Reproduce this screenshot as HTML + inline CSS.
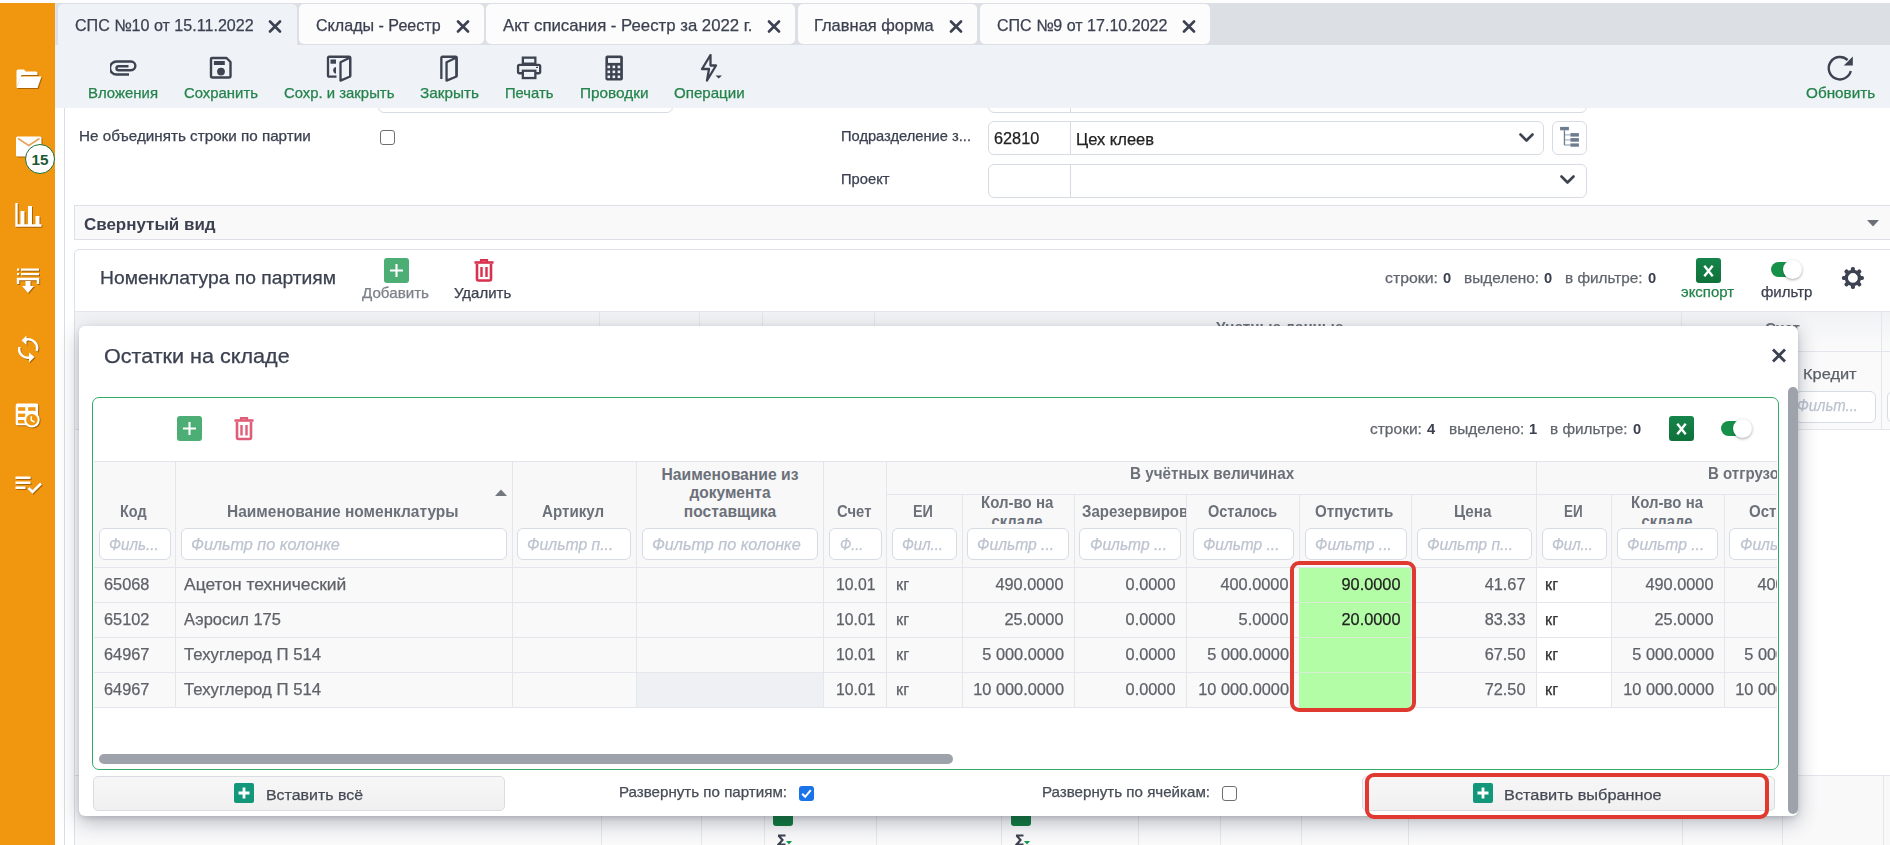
<!DOCTYPE html>
<html><head><meta charset="utf-8"><style>
html,body{margin:0;padding:0;}
body{width:1890px;height:845px;position:relative;overflow:hidden;background:#fff;font-family:'Liberation Sans', sans-serif;}
.t{font-family:'Liberation Sans', sans-serif;-webkit-text-stroke:0.25px currentColor;}
</style></head><body>
<div style="position:absolute;left:0px;top:0px;width:1890px;height:3px;background:#fdfdfd"></div>
<div style="position:absolute;left:0px;top:3px;width:55px;height:842px;background:#f0960f"></div>
<div style="position:absolute;left:55px;top:3px;width:1835px;height:42px;background:#dcdfe4"></div>
<div style="position:absolute;left:55px;top:3px;width:1px;height:105px;background:#dfe6f0"></div>
<div style="position:absolute;left:378px;top:78px;width:295px;height:34.5px;box-sizing:border-box;border:1px solid #d7dbe4;border-radius:6px;background:#fff"></div>
<div style="position:absolute;left:988px;top:78px;width:599px;height:34.5px;box-sizing:border-box;border:1px solid #d7dbe4;border-radius:6px;background:#fff"></div>
<div style="position:absolute;left:1069.5px;top:78px;width:1px;height:34px;background:#d7dbe4"></div>
<div style="position:absolute;left:55px;top:45px;width:1835px;height:63px;background:#eff2f7"></div>
<div style="position:absolute;left:58px;top:4px;width:239px;height:41px;background:#eff2f7;border-radius:5px 5px 0 0"></div>
<div class="t" style="position:absolute;top:17.43px;font-size:16.2px;line-height:16.2px;white-space:nowrap;color:#3b4150;font-weight:400;left:74.8px;transform-origin:0 0;transform:scaleX(0.9941);">СПС №10 от 15.11.2022</div>
<svg style="position:absolute;left:268px;top:20px;" width="14" height="13" viewBox="0 0 14 13"><path d="M2 1.5 L12 11.5 M12 1.5 L2 11.5" stroke="#3b4150" stroke-width="2.6" stroke-linecap="round" fill="none"/></svg>
<div style="position:absolute;left:299px;top:4px;width:185px;height:40px;background:#fcfcfd;border-radius:5px"></div>
<div class="t" style="position:absolute;top:17.43px;font-size:16.2px;line-height:16.2px;white-space:nowrap;color:#3b4150;font-weight:400;left:316px;transform-origin:0 0;transform:scaleX(0.9931);">Склады - Реестр</div>
<svg style="position:absolute;left:456px;top:20px;" width="14" height="13" viewBox="0 0 14 13"><path d="M2 1.5 L12 11.5 M12 1.5 L2 11.5" stroke="#3b4150" stroke-width="2.6" stroke-linecap="round" fill="none"/></svg>
<div style="position:absolute;left:486px;top:4px;width:309px;height:40px;background:#fcfcfd;border-radius:5px"></div>
<div class="t" style="position:absolute;top:17.43px;font-size:16.2px;line-height:16.2px;white-space:nowrap;color:#3b4150;font-weight:400;left:502.5px;transform-origin:0 0;transform:scaleX(1.0350);">Акт списания - Реестр за 2022 г.</div>
<svg style="position:absolute;left:767px;top:20px;" width="14" height="13" viewBox="0 0 14 13"><path d="M2 1.5 L12 11.5 M12 1.5 L2 11.5" stroke="#3b4150" stroke-width="2.6" stroke-linecap="round" fill="none"/></svg>
<div style="position:absolute;left:798px;top:4px;width:179px;height:40px;background:#fcfcfd;border-radius:5px"></div>
<div class="t" style="position:absolute;top:17.43px;font-size:16.2px;line-height:16.2px;white-space:nowrap;color:#3b4150;font-weight:400;left:814.4px;transform-origin:0 0;transform:scaleX(1.0180);">Главная форма</div>
<svg style="position:absolute;left:948.6px;top:20px;" width="14" height="13" viewBox="0 0 14 13"><path d="M2 1.5 L12 11.5 M12 1.5 L2 11.5" stroke="#3b4150" stroke-width="2.6" stroke-linecap="round" fill="none"/></svg>
<div style="position:absolute;left:980px;top:4px;width:230px;height:40px;background:#fcfcfd;border-radius:5px"></div>
<div class="t" style="position:absolute;top:17.43px;font-size:16.2px;line-height:16.2px;white-space:nowrap;color:#3b4150;font-weight:400;left:996.5px;transform-origin:0 0;transform:scaleX(0.9910);">СПС №9 от 17.10.2022</div>
<svg style="position:absolute;left:1181.6px;top:20px;" width="14" height="13" viewBox="0 0 14 13"><path d="M2 1.5 L12 11.5 M12 1.5 L2 11.5" stroke="#3b4150" stroke-width="2.6" stroke-linecap="round" fill="none"/></svg>
<div class="t" style="position:absolute;top:86.03px;font-size:14.2px;line-height:14.2px;white-space:nowrap;color:#24834b;font-weight:400;left:88px;transform-origin:0 0;transform:scaleX(1.0531);">Вложения</div>
<div class="t" style="position:absolute;top:86.03px;font-size:14.2px;line-height:14.2px;white-space:nowrap;color:#24834b;font-weight:400;left:184px;transform-origin:0 0;transform:scaleX(1.0494);">Сохранить</div>
<div class="t" style="position:absolute;top:86.03px;font-size:14.2px;line-height:14.2px;white-space:nowrap;color:#24834b;font-weight:400;left:283.6px;transform-origin:0 0;transform:scaleX(1.0485);">Сохр. и закрыть</div>
<div class="t" style="position:absolute;top:86.03px;font-size:14.2px;line-height:14.2px;white-space:nowrap;color:#24834b;font-weight:400;left:420px;transform-origin:0 0;transform:scaleX(1.0795);">Закрыть</div>
<div class="t" style="position:absolute;top:86.03px;font-size:14.2px;line-height:14.2px;white-space:nowrap;color:#24834b;font-weight:400;left:504.6px;transform-origin:0 0;transform:scaleX(1.0412);">Печать</div>
<div class="t" style="position:absolute;top:86.03px;font-size:14.2px;line-height:14.2px;white-space:nowrap;color:#24834b;font-weight:400;left:579.5px;transform-origin:0 0;transform:scaleX(1.0811);">Проводки</div>
<div class="t" style="position:absolute;top:86.03px;font-size:14.2px;line-height:14.2px;white-space:nowrap;color:#24834b;font-weight:400;left:674px;transform-origin:0 0;transform:scaleX(1.0637);">Операции</div>
<div class="t" style="position:absolute;top:86.03px;font-size:14.2px;line-height:14.2px;white-space:nowrap;color:#24834b;font-weight:400;left:1805.8px;transform-origin:0 0;transform:scaleX(1.0770);">Обновить</div>
<svg style="position:absolute;left:110px;top:60px;" width="27" height="17" viewBox="0 0 27 17"><path d="M19 14.5 H6.5 A6.5 6.5 0 0 1 6.5 1.5 H21 A4.35 4.35 0 0 1 21 10.2 H8.5 A2 2 0 0 1 8.5 6.2 H18.5" stroke="#3d4350" stroke-width="2.4" fill="none"/></svg>
<svg style="position:absolute;left:209px;top:56px;" width="24" height="24" viewBox="0 0 24 24"><path d="M3 2 H17.5 L21.5 6 V20 A1.5 1.5 0 0 1 20 21.5 H3.5 A1.5 1.5 0 0 1 2 20 V3 A1 1 0 0 1 3 2 Z" stroke="#3d4350" stroke-width="2.4" fill="none" stroke-linejoin="round"/><rect x="4.9" y="5" width="10.9" height="4" fill="#3d4350"/><circle cx="12" cy="15.6" r="3.9" fill="#3d4350"/></svg>
<svg style="position:absolute;left:325px;top:54px;" width="28" height="29" viewBox="0 0 28 29"><path d="M11.5 22.65 H4 A1 1 0 0 1 3 21.65 V3.75 A1 1 0 0 1 4 2.75 H24.15 A1 1 0 0 1 25.15 3.75 V22" stroke="#3d4350" stroke-width="2.3" fill="none"/><path d="M15.5 8.2 L25.15 3.5 V22.5 L15.5 26.6 Z" stroke="#3d4350" stroke-width="2.3" fill="none" stroke-linejoin="round"/><rect x="5.5" y="5.5" width="5.5" height="4.2" fill="#3d4350"/><path d="M11 13 A3.4 3.4 0 0 0 11 19.7 Z" fill="#3d4350"/></svg>
<svg style="position:absolute;left:439px;top:54px;" width="20" height="29" viewBox="0 0 20 29"><path d="M2.35 25 V3.75 A1 1 0 0 1 3.35 2.75 H16.55 A1 1 0 0 1 17.55 3.75 V22" stroke="#3d4350" stroke-width="2.3" fill="none"/><path d="M7.55 8.2 L17.55 3.5 V22.5 L7.55 26.6 Z" stroke="#3d4350" stroke-width="2.3" fill="none" stroke-linejoin="round"/></svg>
<svg style="position:absolute;left:515px;top:56px;" width="28" height="25" viewBox="0 0 28 25"><rect x="7.85" y="1.65" width="12.5" height="6" stroke="#3d4350" stroke-width="2.3" fill="none"/><path d="M7.5 17.25 H4.5 A1.5 1.5 0 0 1 3.05 15.75 V10.35 A1.5 1.5 0 0 1 4.55 8.85 H23.65 A1.5 1.5 0 0 1 25.15 10.35 V15.75 A1.5 1.5 0 0 1 23.65 17.25 H20.5" stroke="#3d4350" stroke-width="2.3" fill="none"/><rect x="7.85" y="14.75" width="12.5" height="7.3" stroke="#3d4350" stroke-width="2.3" fill="none"/><rect x="21" y="10.8" width="2" height="1.2" fill="#3d4350"/></svg>
<svg style="position:absolute;left:604px;top:55px;" width="20" height="27" viewBox="0 0 20 27"><rect x="1.4" y="0.4" width="17.5" height="25" rx="2" fill="#3d4350"/><rect x="4" y="3.1" width="12.2" height="4.8" fill="#eff2f7"/><rect x="3.50" y="10.60" width="2.6" height="2.6" fill="#eff2f7"/><rect x="3.50" y="15.55" width="2.6" height="2.6" fill="#eff2f7"/><rect x="3.50" y="20.50" width="2.6" height="2.6" fill="#eff2f7"/><rect x="8.55" y="10.60" width="2.6" height="2.6" fill="#eff2f7"/><rect x="8.55" y="15.55" width="2.6" height="2.6" fill="#eff2f7"/><rect x="8.55" y="20.50" width="2.6" height="2.6" fill="#eff2f7"/><rect x="13.60" y="10.60" width="2.6" height="2.6" fill="#eff2f7"/><rect x="13.60" y="15.55" width="2.6" height="2.6" fill="#eff2f7"/><rect x="13.60" y="20.50" width="2.6" height="2.6" fill="#eff2f7"/></svg>
<svg style="position:absolute;left:700px;top:54px;" width="23" height="28" viewBox="0 0 23 28"><path d="M10.5 1 L2 15 H9 L7 26.5 L16 11.5 H10.5 Z" stroke="#3d4350" stroke-width="2.3" fill="none" stroke-linejoin="round"/><path d="M15.5 21.5 H22 L18.75 24.5 Z" fill="#3d4350"/></svg>
<svg style="position:absolute;left:1826px;top:54px;" width="28" height="28" viewBox="0 0 28 28"><path d="M24.8 17 A11.2 11.2 0 1 1 21.6 6" stroke="#3d4350" stroke-width="2.4" fill="none"/><path d="M17.8 11.6 H26.8 V2.6 Z" fill="#3d4350"/></svg>
<svg style="position:absolute;left:15px;top:68px;filter:drop-shadow(1px 1px 0.6px rgba(110,60,0,0.55))" width="28" height="22" viewBox="0 0 28 22"><path d="M1.5 19.5 V3 A1.5 1.5 0 0 1 3 1.5 H9 L11 3.5 H21 A1.5 1.5 0 0 1 22.5 5 V7 H6.5 Z" fill="#fff"/><path d="M5.5 8.5 H26.5 L22.5 20 H1.5 Z" fill="#fff"/></svg>
<svg style="position:absolute;left:15px;top:135px;filter:drop-shadow(1px 1px 0.6px rgba(110,60,0,0.55))" width="28" height="23" viewBox="0 0 28 23"><rect x="1" y="1.5" width="25.5" height="20" rx="1.5" fill="#fff"/><path d="M3 3.5 L13.75 10.5 L24.5 3.5" stroke="#e8a35a" stroke-width="1.6" fill="none"/></svg>
<div style="position:absolute;left:25px;top:144px;width:30px;height:30px;box-sizing:border-box;border:1.6px solid #1f6e34;border-radius:50%;background:#fff"></div>
<div class="t" style="position:absolute;top:152.80px;font-size:14px;line-height:14px;white-space:nowrap;color:#1c5a35;font-weight:700;-webkit-text-stroke:0;left:40px;transform-origin:50% 0;transform:translateX(-50%) scaleX(1.0913);">15</div>
<svg style="position:absolute;left:15px;top:202px;filter:drop-shadow(1px 1px 0.6px rgba(110,60,0,0.55))" width="28" height="25" viewBox="0 0 28 25"><path d="M1.5 1 V23.5 H26.5" stroke="#fff" stroke-width="2.4" fill="none"/><rect x="5.5" y="9" width="4" height="14" fill="#fff"/><rect x="13" y="4" width="4" height="19" fill="#fff"/><rect x="20.5" y="14" width="4" height="9" fill="#fff"/></svg>
<svg style="position:absolute;left:16px;top:267px;filter:drop-shadow(1px 1px 0.6px rgba(110,60,0,0.55))" width="25" height="28" viewBox="0 0 25 28"><rect x="1" y="1.5" width="2.2" height="2.2" fill="#fff"/><rect x="5" y="1.5" width="18" height="2.2" fill="#fff"/><rect x="1" y="6" width="2.2" height="2.2" fill="#fff"/><rect x="5" y="6" width="18" height="2.2" fill="#fff"/><path d="M2 17 V12 H22 V17" stroke="#fff" stroke-width="2.4" fill="none"/><path d="M9.5 14 H14.5 V19 H18 L12 26 L6 19 H9.5 Z" fill="#fff"/></svg>
<svg style="position:absolute;left:17px;top:335px;filter:drop-shadow(1px 1px 0.6px rgba(110,60,0,0.55))" width="23" height="29" viewBox="0 0 23 29"><path d="M7.5 5.5 A8.5 8.5 0 0 1 19.5 16" stroke="#fff" stroke-width="2.4" fill="none"/><path d="M9.5 0.5 L4.5 5.5 L9.5 10 Z" fill="#fff"/><path d="M14 22 A8.5 8.5 0 0 1 2.5 12" stroke="#fff" stroke-width="2.4" fill="none"/><path d="M12 17.5 L17.5 22 L12 27.5 Z" fill="#fff"/></svg>
<svg style="position:absolute;left:15px;top:403px;filter:drop-shadow(1px 1px 0.6px rgba(110,60,0,0.55))" width="27" height="27" viewBox="0 0 27 27"><rect x="0.75" y="0.5" width="22.35" height="21.8" rx="1.5" fill="#fff"/><rect x="3.1" y="4.2" width="7.2" height="3.6" fill="#f0960f"/><rect x="3.1" y="10.6" width="7.2" height="3.4" fill="#f0960f"/><rect x="3.1" y="17" width="7.2" height="3.4" fill="#f0960f"/><rect x="13.1" y="4.2" width="7.5" height="3.6" fill="#f0960f"/><circle cx="16.9" cy="16.7" r="7.8" fill="#fff"/><circle cx="16.9" cy="16.7" r="5.75" fill="#f0960f"/><path d="M16.3 13.3 V17.3 L19.5 19" stroke="#fff" stroke-width="1.5" fill="none"/></svg>
<svg style="position:absolute;left:15px;top:476px;filter:drop-shadow(1px 1px 0.6px rgba(110,60,0,0.55))" width="28" height="19" viewBox="0 0 28 19"><rect x="0.5" y="0.5" width="15" height="2.5" fill="#fff"/><rect x="0.5" y="5.5" width="15" height="2.5" fill="#fff"/><rect x="0.5" y="10.5" width="10" height="2.5" fill="#fff"/><path d="M13.5 12 L17.5 16 L26 7.5" stroke="#fff" stroke-width="2.5" fill="none"/></svg>
<div style="position:absolute;left:64px;top:108px;width:1px;height:737px;background:#d9dde8"></div>
<div class="t" style="position:absolute;top:129.03px;font-size:14.2px;line-height:14.2px;white-space:nowrap;color:#3b4150;font-weight:400;left:79.3px;transform-origin:0 0;transform:scaleX(1.0722);">Не объединять строки по партии</div>
<div style="position:absolute;left:380px;top:130px;width:14.5px;height:14.5px;box-sizing:border-box;border:1.4px solid #6f6f6f;border-radius:3px;background:#fff"></div>
<div class="t" style="position:absolute;top:129.33px;font-size:14.2px;line-height:14.2px;white-space:nowrap;color:#3b4150;font-weight:400;left:841px;transform-origin:0 0;transform:scaleX(1.0344);">Подразделение з...</div>
<div style="position:absolute;left:988px;top:120.5px;width:556px;height:34px;box-sizing:border-box;border:1px solid #d7dbe4;border-radius:6px;background:#fff"></div>
<div style="position:absolute;left:1069.5px;top:121px;width:1px;height:33px;background:#d7dbe4"></div>
<div class="t" style="position:absolute;top:130.43px;font-size:16.2px;line-height:16.2px;white-space:nowrap;color:#222;font-weight:400;left:994px;transform-origin:0 0;transform:scaleX(1.0063);">62810</div>
<div class="t" style="position:absolute;top:130.73px;font-size:16.2px;line-height:16.2px;white-space:nowrap;color:#222;font-weight:400;left:1075.7px;transform-origin:0 0;transform:scaleX(1.0192);">Цех клеев</div>
<svg style="position:absolute;left:1519px;top:133px;" width="15" height="10" viewBox="0 0 15 10"><path d="M1.5 1.5 L7.5 7.5 L13.5 1.5" stroke="#3d4350" stroke-width="2.6" fill="none" stroke-linecap="round" stroke-linejoin="round"/></svg>
<div style="position:absolute;left:1552px;top:120.5px;width:35px;height:34px;box-sizing:border-box;border:1px solid #d7dbe4;border-radius:6px;background:#fff"></div>
<svg style="position:absolute;left:1559px;top:126px;" width="21" height="21" viewBox="0 0 21 21"><rect x="1.1" y="0.9" width="8.8" height="3.4" fill="#6d7c8e"/><rect x="4.8" y="4.3" width="1.3" height="15" fill="#6d7c8e"/><path d="M6 8.8 H11.4 M6 13.9 H11.4 M6 19 H11.4" stroke="#a9b4c1" stroke-width="1.3"/><rect x="11.4" y="7.1" width="8.5" height="3.5" fill="#6d7c8e"/><rect x="11.4" y="12.1" width="8.5" height="3.6" fill="#6d7c8e"/><rect x="11.4" y="17.4" width="8.5" height="3.3" fill="#6d7c8e"/></svg>
<div class="t" style="position:absolute;top:172.43px;font-size:14.2px;line-height:14.2px;white-space:nowrap;color:#3b4150;font-weight:400;left:841px;transform-origin:0 0;transform:scaleX(1.0378);">Проект</div>
<div style="position:absolute;left:988px;top:163.5px;width:599px;height:34px;box-sizing:border-box;border:1px solid #d7dbe4;border-radius:6px;background:#fff"></div>
<div style="position:absolute;left:1069.5px;top:164px;width:1px;height:33px;background:#d7dbe4"></div>
<svg style="position:absolute;left:1560px;top:175px;" width="15" height="10" viewBox="0 0 15 10"><path d="M1.5 1.5 L7.5 7.5 L13.5 1.5" stroke="#3d4350" stroke-width="2.6" fill="none" stroke-linecap="round" stroke-linejoin="round"/></svg>
<div style="position:absolute;left:74px;top:205px;width:1830px;height:35px;box-sizing:border-box;border:1px solid #dde0e9;background:#f9f9fa"></div>
<div class="t" style="position:absolute;top:216.80px;font-size:16px;line-height:16px;white-space:nowrap;color:#3b4150;font-weight:700;-webkit-text-stroke:0;left:84.4px;transform-origin:0 0;transform:scaleX(1.0594);">Свернутый вид</div>
<svg style="position:absolute;left:1866px;top:219px;" width="14" height="9" viewBox="0 0 14 9"><path d="M1 1 H13 L7 7.5 Z" fill="#6b6f76"/></svg>
<div style="position:absolute;left:74px;top:248.5px;width:1830px;height:620px;box-sizing:border-box;border:1px solid #dde0e9;border-radius:5px;background:#fff"></div>
<div style="position:absolute;left:75px;top:310.5px;width:1815px;height:1px;background:#e3e6ec"></div>
<div class="t" style="position:absolute;top:268.90px;font-size:18px;line-height:18px;white-space:nowrap;color:#3b4150;font-weight:400;left:100.4px;transform-origin:0 0;transform:scaleX(1.0710);">Номенклатура по партиям</div>
<div style="position:absolute;left:383.5px;top:257.5px;width:25px;height:25px;background:#4cad75;border-radius:3px"></div>
<svg style="position:absolute;left:383.5px;top:257.5px;" width="25" height="25" viewBox="0 0 25 25"><path d="M12.5 6 V19 M6 12.5 H19" stroke="#fff" stroke-width="2.1"/></svg>
<div class="t" style="position:absolute;top:286.13px;font-size:14.2px;line-height:14.2px;white-space:nowrap;color:#7c8088;font-weight:400;left:362px;transform-origin:0 0;transform:scaleX(1.0685);">Добавить</div>
<svg style="position:absolute;left:473px;top:258px;" width="22" height="24" viewBox="0 0 22 24"><path d="M1.5 4.5 H20.5" stroke="#d8304e" stroke-width="2.6"/><path d="M8 4 V2 H14 V4" stroke="#d8304e" stroke-width="2.2" fill="none"/><path d="M4 6 V21 A1.5 1.5 0 0 0 5.5 22.5 H16.5 A1.5 1.5 0 0 0 18 21 V6" stroke="#d8304e" stroke-width="2.6" fill="none"/><path d="M8.5 9 V19 M13.5 9 V19" stroke="#d8304e" stroke-width="2.4"/></svg>
<div class="t" style="position:absolute;top:286.13px;font-size:14.2px;line-height:14.2px;white-space:nowrap;color:#3b4150;font-weight:400;left:454.4px;transform-origin:0 0;transform:scaleX(1.0559);">Удалить</div>
<div class="t" style="position:absolute;top:271.39px;font-size:14.6px;line-height:14.6px;white-space:nowrap;color:#60656d;font-weight:400;left:1385px;transform-origin:0 0;transform:scaleX(1.0837);">строки:</div>
<div class="t" style="position:absolute;top:271.39px;font-size:14.6px;line-height:14.6px;white-space:nowrap;color:#3b4150;font-weight:700;-webkit-text-stroke:0;left:1442.9px;transform-origin:0 0;transform:scaleX(1.0085);">0</div>
<div class="t" style="position:absolute;top:271.39px;font-size:14.6px;line-height:14.6px;white-space:nowrap;color:#60656d;font-weight:400;left:1464px;transform-origin:0 0;transform:scaleX(1.0524);">выделено:</div>
<div class="t" style="position:absolute;top:271.39px;font-size:14.6px;line-height:14.6px;white-space:nowrap;color:#3b4150;font-weight:700;-webkit-text-stroke:0;left:1544px;transform-origin:0 0;transform:scaleX(1.0085);">0</div>
<div class="t" style="position:absolute;top:271.39px;font-size:14.6px;line-height:14.6px;white-space:nowrap;color:#60656d;font-weight:400;left:1565.3px;transform-origin:0 0;transform:scaleX(1.0498);">в фильтре:</div>
<div class="t" style="position:absolute;top:271.39px;font-size:14.6px;line-height:14.6px;white-space:nowrap;color:#3b4150;font-weight:700;-webkit-text-stroke:0;left:1647.9px;transform-origin:0 0;transform:scaleX(1.0085);">0</div>
<div style="position:absolute;left:1696px;top:257.5px;width:25px;height:25px;background:linear-gradient(#15854b,#0f7139);border-radius:3px"></div>
<svg style="position:absolute;left:1696px;top:257.5px;" width="25" height="25" viewBox="0 0 25 25"><path d="M8.3 7.8 L16.7 18.3 M16.7 7.8 L8.3 18.3" stroke="#fff" stroke-width="2.4"/></svg>
<div class="t" style="position:absolute;top:285.43px;font-size:14.2px;line-height:14.2px;white-space:nowrap;color:#24834b;font-weight:400;left:1681.4px;transform-origin:0 0;transform:scaleX(1.0544);">экспорт</div>
<div style="position:absolute;left:1771px;top:262px;width:29px;height:14.5px;background:#17914a;border-radius:8px"></div>
<div style="position:absolute;left:1782.5px;top:259.5px;width:19px;height:19px;background:#fff;border-radius:50%;box-shadow:0 1px 3px rgba(0,0,0,.35)"></div>
<div class="t" style="position:absolute;top:285.43px;font-size:14.2px;line-height:14.2px;white-space:nowrap;color:#3b4150;font-weight:400;left:1760.6px;transform-origin:0 0;transform:scaleX(1.0588);">фильтр</div>
<svg style="position:absolute;left:1841px;top:266px;" width="24" height="24" viewBox="0 0 24 24"><circle cx="11.9" cy="11.9" r="6.6" stroke="#3d4350" stroke-width="3.3" fill="none"/><g fill="#3d4350"><rect x="9.9" y="0.9" width="4" height="6" rx="1.6" transform="rotate(0 11.9 11.9)"/><rect x="9.9" y="0.9" width="4" height="6" rx="1.6" transform="rotate(45 11.9 11.9)"/><rect x="9.9" y="0.9" width="4" height="6" rx="1.6" transform="rotate(90 11.9 11.9)"/><rect x="9.9" y="0.9" width="4" height="6" rx="1.6" transform="rotate(135 11.9 11.9)"/><rect x="9.9" y="0.9" width="4" height="6" rx="1.6" transform="rotate(180 11.9 11.9)"/><rect x="9.9" y="0.9" width="4" height="6" rx="1.6" transform="rotate(225 11.9 11.9)"/><rect x="9.9" y="0.9" width="4" height="6" rx="1.6" transform="rotate(270 11.9 11.9)"/><rect x="9.9" y="0.9" width="4" height="6" rx="1.6" transform="rotate(315 11.9 11.9)"/></g></svg>
<div style="position:absolute;left:75px;top:311.5px;width:1815px;height:118px;background:linear-gradient(#f1f2f4,#fafafb 30%)"></div>
<div style="position:absolute;left:75px;top:429px;width:1815px;height:1px;background:#e3e6ec"></div>
<div style="position:absolute;left:599px;top:312px;width:1px;height:117px;background:#e3e6ec"></div>
<div style="position:absolute;left:699px;top:312px;width:1px;height:117px;background:#e3e6ec"></div>
<div style="position:absolute;left:762px;top:312px;width:1px;height:117px;background:#e3e6ec"></div>
<div style="position:absolute;left:874px;top:312px;width:1px;height:117px;background:#e3e6ec"></div>
<div style="position:absolute;left:1680.5px;top:312px;width:1px;height:117px;background:#e3e6ec"></div>
<div style="position:absolute;left:1880.5px;top:312px;width:1px;height:117px;background:#e3e6ec"></div>
<div style="position:absolute;left:1681px;top:350.5px;width:209px;height:1px;background:#e3e6ec"></div>
<div class="t" style="position:absolute;top:319.42px;font-size:15.5px;line-height:15.5px;white-space:nowrap;color:#6b7079;font-weight:700;-webkit-text-stroke:0;left:1215.6px;transform-origin:0 0;transform:scaleX(0.9859);">Учетные данные</div>
<div class="t" style="position:absolute;top:319.52px;font-size:15.5px;line-height:15.5px;white-space:nowrap;color:#6b7079;font-weight:700;-webkit-text-stroke:0;left:1765px;transform-origin:0 0;transform:scaleX(0.9722);">Счет</div>
<div class="t" style="position:absolute;top:365.78px;font-size:15.2px;line-height:15.2px;white-space:nowrap;color:#5c6169;font-weight:400;left:1803.4px;transform-origin:0 0;transform:scaleX(1.0781);">Кредит</div>
<div style="position:absolute;left:1794.5px;top:390.5px;width:81px;height:32.5px;box-sizing:border-box;border:1px solid #d7dbe4;border-radius:6px;background:#fff"></div>
<div style="position:absolute;left:1886.5px;top:390.5px;width:30px;height:32.5px;box-sizing:border-box;border:1px solid #d7dbe4;border-radius:6px;background:#fff"></div>
<div class="t" style="position:absolute;top:398.10px;font-size:16px;line-height:16px;white-space:nowrap;color:#bdc4d0;font-weight:400;font-style:italic;left:1797px;transform-origin:0 0;transform:scaleX(0.9306);">Фильт...</div>
<div style="position:absolute;left:75px;top:775px;width:1815px;height:70px;background:#f9f9fa"></div>
<div style="position:absolute;left:75px;top:774.5px;width:1815px;height:1px;background:#e3e6ec"></div>
<div style="position:absolute;left:600.8px;top:775px;width:1px;height:70px;background:#e3e6ec"></div>
<div style="position:absolute;left:700.8px;top:775px;width:1px;height:70px;background:#e3e6ec"></div>
<div style="position:absolute;left:764px;top:775px;width:1px;height:70px;background:#e3e6ec"></div>
<div style="position:absolute;left:876px;top:775px;width:1px;height:70px;background:#e3e6ec"></div>
<div style="position:absolute;left:1000.7px;top:775px;width:1px;height:70px;background:#e3e6ec"></div>
<div style="position:absolute;left:1138px;top:775px;width:1px;height:70px;background:#e3e6ec"></div>
<div style="position:absolute;left:1219.7px;top:775px;width:1px;height:70px;background:#e3e6ec"></div>
<div style="position:absolute;left:1300.7px;top:775px;width:1px;height:70px;background:#e3e6ec"></div>
<div style="position:absolute;left:1407.7px;top:775px;width:1px;height:70px;background:#e3e6ec"></div>
<div style="position:absolute;left:1682.3px;top:775px;width:1px;height:70px;background:#e3e6ec"></div>
<div style="position:absolute;left:1782.3px;top:775px;width:1px;height:70px;background:#e3e6ec"></div>
<div style="position:absolute;left:1882.8px;top:775px;width:1px;height:70px;background:#e3e6ec"></div>
<div style="position:absolute;left:773px;top:805px;width:20px;height:21px;background:#0f7a3c;border-radius:3px"></div>
<svg style="position:absolute;left:777px;top:834px;" width="18" height="11" viewBox="0 0 18 11"><path d="M1 1.5 H8.5 M1.5 1.5 L5.5 6 L1.5 10.5 H8.5" stroke="#3d4350" stroke-width="2.2" fill="none"/><path d="M9 7 H15 L12 10.5 Z" fill="#129a4c"/></svg>
<div style="position:absolute;left:1010.7px;top:805px;width:20px;height:21px;background:#0f7a3c;border-radius:3px"></div>
<svg style="position:absolute;left:1014.7px;top:834px;" width="18" height="11" viewBox="0 0 18 11"><path d="M1 1.5 H8.5 M1.5 1.5 L5.5 6 L1.5 10.5 H8.5" stroke="#3d4350" stroke-width="2.2" fill="none"/><path d="M9 7 H15 L12 10.5 Z" fill="#129a4c"/></svg>
<div style="position:absolute;left:79px;top:326px;width:1719px;height:490px;background:#fff;border-radius:6px;box-shadow:0 6px 20px rgba(35,45,65,0.32), 0 2px 5px rgba(35,45,65,0.14)"></div>
<div class="t" style="position:absolute;top:346.62px;font-size:19.5px;line-height:19.5px;white-space:nowrap;color:#3b4150;font-weight:400;left:104px;transform-origin:0 0;transform:scaleX(1.1066);">Остатки на складе</div>
<svg style="position:absolute;left:1771px;top:348px;" width="16" height="15" viewBox="0 0 16 15"><path d="M2 1.5 L14 13.5 M14 1.5 L2 13.5" stroke="#3b4150" stroke-width="2.8" fill="none"/></svg>
<div style="position:absolute;left:1788px;top:386.5px;width:10px;height:427px;background:#9ea2aa;border-radius:5px"></div>
<div style="position:absolute;left:92px;top:397px;width:1686.5px;height:373px;box-sizing:border-box;border:1.5px solid #33ac68;border-radius:7px;background:#fff"></div>
<div style="position:absolute;left:176.5px;top:415.5px;width:25px;height:25px;background:#4cad75;border-radius:3px"></div>
<svg style="position:absolute;left:176.5px;top:415.5px;" width="25" height="25" viewBox="0 0 25 25"><path d="M12.5 6 V19 M6 12.5 H19" stroke="#fff" stroke-width="2.1"/></svg>
<svg style="position:absolute;left:233px;top:415.5px;" width="22" height="25" viewBox="0 0 22 25"><path d="M1.5 4.5 H20.5" stroke="#e05d78" stroke-width="2.6"/><path d="M8 4 V2 H14 V4" stroke="#e05d78" stroke-width="2.2" fill="none"/><path d="M4 6 V21.5 A1.5 1.5 0 0 0 5.5 23 H16.5 A1.5 1.5 0 0 0 18 21.5 V6" stroke="#e05d78" stroke-width="2.6" fill="none"/><path d="M8.5 9 V19.5 M13.5 9 V19.5" stroke="#e05d78" stroke-width="2.4"/></svg>
<div class="t" style="position:absolute;top:421.79px;font-size:14.6px;line-height:14.6px;white-space:nowrap;color:#60656d;font-weight:400;left:1369.8px;transform-origin:0 0;transform:scaleX(1.0633);">строки:</div>
<div class="t" style="position:absolute;top:421.79px;font-size:14.6px;line-height:14.6px;white-space:nowrap;color:#3b4150;font-weight:700;-webkit-text-stroke:0;left:1426.7px;transform-origin:0 0;transform:scaleX(1.0085);">4</div>
<div class="t" style="position:absolute;top:421.79px;font-size:14.6px;line-height:14.6px;white-space:nowrap;color:#60656d;font-weight:400;left:1448.6px;transform-origin:0 0;transform:scaleX(1.0580);">выделено:</div>
<div class="t" style="position:absolute;top:421.79px;font-size:14.6px;line-height:14.6px;white-space:nowrap;color:#3b4150;font-weight:700;-webkit-text-stroke:0;left:1529px;transform-origin:0 0;transform:scaleX(1.0085);">1</div>
<div class="t" style="position:absolute;top:421.79px;font-size:14.6px;line-height:14.6px;white-space:nowrap;color:#60656d;font-weight:400;left:1550.2px;transform-origin:0 0;transform:scaleX(1.0484);">в фильтре:</div>
<div class="t" style="position:absolute;top:421.79px;font-size:14.6px;line-height:14.6px;white-space:nowrap;color:#3b4150;font-weight:700;-webkit-text-stroke:0;left:1632.7px;transform-origin:0 0;transform:scaleX(1.0085);">0</div>
<div style="position:absolute;left:1668.5px;top:415.5px;width:25px;height:25px;background:linear-gradient(#15854b,#0f7139);border-radius:3px"></div>
<svg style="position:absolute;left:1668.5px;top:415.5px;" width="25" height="25" viewBox="0 0 25 25"><path d="M8.3 7.8 L16.7 18.3 M16.7 7.8 L8.3 18.3" stroke="#fff" stroke-width="2.4"/></svg>
<div style="position:absolute;left:1721px;top:421px;width:29px;height:14.5px;background:#17914a;border-radius:8px"></div>
<div style="position:absolute;left:1732.5px;top:418.5px;width:19px;height:19px;background:#fff;border-radius:50%;box-shadow:0 1px 3px rgba(0,0,0,.35)"></div>
<div style="position:absolute;left:93.5px;top:461px;width:1683.0px;height:1px;background:#e1e4ea"></div>
<div style="position:absolute;left:93.5px;top:462px;width:1683.0px;height:105px;background:#f8f8f9"></div>
<div style="position:absolute;left:93.5px;top:567px;width:1683.0px;height:140px;background:#f9f9fa"></div>
<div style="position:absolute;left:1536.5px;top:567.5px;width:74.5px;height:140px;background:#fff"></div>
<div style="position:absolute;left:636.5px;top:672.5px;width:186.5px;height:34.5px;background:#eef0f3"></div>
<div style="position:absolute;left:175px;top:462px;width:1px;height:245px;background:#e3e6ec"></div>
<div style="position:absolute;left:512px;top:462px;width:1px;height:245px;background:#e3e6ec"></div>
<div style="position:absolute;left:636px;top:462px;width:1px;height:245px;background:#e3e6ec"></div>
<div style="position:absolute;left:823px;top:462px;width:1px;height:245px;background:#e3e6ec"></div>
<div style="position:absolute;left:886px;top:462px;width:1px;height:245px;background:#e3e6ec"></div>
<div style="position:absolute;left:1536px;top:462px;width:1px;height:245px;background:#e3e6ec"></div>
<div style="position:absolute;left:962px;top:494px;width:1px;height:213px;background:#e3e6ec"></div>
<div style="position:absolute;left:1074px;top:494px;width:1px;height:213px;background:#e3e6ec"></div>
<div style="position:absolute;left:1186px;top:494px;width:1px;height:213px;background:#e3e6ec"></div>
<div style="position:absolute;left:1299px;top:494px;width:1px;height:213px;background:#e3e6ec"></div>
<div style="position:absolute;left:1411px;top:494px;width:1px;height:213px;background:#e3e6ec"></div>
<div style="position:absolute;left:1611px;top:494px;width:1px;height:213px;background:#e3e6ec"></div>
<div style="position:absolute;left:1724px;top:494px;width:1px;height:213px;background:#e3e6ec"></div>
<div style="position:absolute;left:886px;top:494px;width:890.5px;height:1px;background:#e3e6ec"></div>
<div style="position:absolute;left:93.5px;top:567px;width:1683.0px;height:1px;background:#e3e6ec"></div>
<div style="position:absolute;left:93.5px;top:602px;width:1683.0px;height:1px;background:#e3e6ec"></div>
<div style="position:absolute;left:93.5px;top:637px;width:1683.0px;height:1px;background:#e3e6ec"></div>
<div style="position:absolute;left:93.5px;top:672px;width:1683.0px;height:1px;background:#e3e6ec"></div>
<div style="position:absolute;left:93.5px;top:707px;width:1683.0px;height:1px;background:#e3e6ec"></div>
<div class="t" style="position:absolute;top:503.41px;font-size:16.1px;line-height:16.1px;white-space:nowrap;color:#6b7079;font-weight:700;-webkit-text-stroke:0;left:120.3px;transform-origin:0 0;transform:scaleX(0.8965);">Код</div>
<div class="t" style="position:absolute;top:503.41px;font-size:16.1px;line-height:16.1px;white-space:nowrap;color:#6b7079;font-weight:700;-webkit-text-stroke:0;left:226.5px;transform-origin:0 0;transform:scaleX(0.9626);">Наименование номенклатуры</div>
<svg style="position:absolute;left:494px;top:488px;" width="14" height="9" viewBox="0 0 14 9"><path d="M1 8 H13 L7 1.5 Z" fill="#73777e"/></svg>
<div class="t" style="position:absolute;top:503.01px;font-size:16.1px;line-height:16.1px;white-space:nowrap;color:#6b7079;font-weight:700;-webkit-text-stroke:0;left:541.8px;transform-origin:0 0;transform:scaleX(0.9418);">Артикул</div>
<div class="t" style="position:absolute;top:465.81px;font-size:16.1px;line-height:16.1px;white-space:nowrap;color:#6b7079;font-weight:700;-webkit-text-stroke:0;left:729.8px;transform-origin:50% 0;transform:translateX(-50%) scaleX(0.9760);">Наименование из</div>
<div class="t" style="position:absolute;top:484.31px;font-size:16.1px;line-height:16.1px;white-space:nowrap;color:#6b7079;font-weight:700;-webkit-text-stroke:0;left:729.8px;transform-origin:50% 0;transform:translateX(-50%) scaleX(0.9625);">документа</div>
<div class="t" style="position:absolute;top:503.01px;font-size:16.1px;line-height:16.1px;white-space:nowrap;color:#6b7079;font-weight:700;-webkit-text-stroke:0;left:729.8px;transform-origin:50% 0;transform:translateX(-50%) scaleX(0.9664);">поставщика</div>
<div class="t" style="position:absolute;top:503.01px;font-size:16.1px;line-height:16.1px;white-space:nowrap;color:#6b7079;font-weight:700;-webkit-text-stroke:0;left:837px;transform-origin:0 0;transform:scaleX(0.9204);">Счет</div>
<div class="t" style="position:absolute;top:503.01px;font-size:16.1px;line-height:16.1px;white-space:nowrap;color:#6b7079;font-weight:700;-webkit-text-stroke:0;left:913px;transform-origin:0 0;transform:scaleX(0.8964);">ЕИ</div>
<div class="t" style="position:absolute;top:464.91px;font-size:16.1px;line-height:16.1px;white-space:nowrap;color:#6b7079;font-weight:700;-webkit-text-stroke:0;left:1130.4px;transform-origin:0 0;transform:scaleX(0.9452);">В учётных величинах</div>
<div class="t" style="position:absolute;top:494.31px;font-size:16.1px;line-height:16.1px;white-space:nowrap;color:#6b7079;font-weight:700;-webkit-text-stroke:0;left:980.6px;transform-origin:0 0;transform:scaleX(0.9342);">Кол-во на</div>
<div style="position:absolute;left:962px;top:494px;width:111px;height:29.5px;overflow:hidden"><div style="position:absolute;left:-962px;top:-494px;width:1890px;height:845px"><div class="t" style="position:absolute;top:512.82px;font-size:16.1px;line-height:16.1px;white-space:nowrap;color:#6b7079;font-weight:700;-webkit-text-stroke:0;left:1017px;transform-origin:50% 0;transform:translateX(-50%) scaleX(0.9181);">складе</div></div></div>
<div style="position:absolute;left:1074px;top:494px;width:112px;height:33px;overflow:hidden"><div style="position:absolute;left:-1074px;top:-494px;width:1890px;height:845px"><div class="t" style="position:absolute;top:502.51px;font-size:16.1px;line-height:16.1px;white-space:nowrap;color:#6b7079;font-weight:700;-webkit-text-stroke:0;left:1082px;transform-origin:0 0;transform:scaleX(0.9342);">Зарезервированно</div></div></div>
<div class="t" style="position:absolute;top:502.51px;font-size:16.1px;line-height:16.1px;white-space:nowrap;color:#6b7079;font-weight:700;-webkit-text-stroke:0;left:1207.5px;transform-origin:0 0;transform:scaleX(0.9000);">Осталось</div>
<div class="t" style="position:absolute;top:502.51px;font-size:16.1px;line-height:16.1px;white-space:nowrap;color:#6b7079;font-weight:700;-webkit-text-stroke:0;left:1315.2px;transform-origin:0 0;transform:scaleX(0.9426);">Отпустить</div>
<div class="t" style="position:absolute;top:503.01px;font-size:16.1px;line-height:16.1px;white-space:nowrap;color:#6b7079;font-weight:700;-webkit-text-stroke:0;left:1454.3px;transform-origin:0 0;transform:scaleX(0.9475);">Цена</div>
<div class="t" style="position:absolute;top:503.01px;font-size:16.1px;line-height:16.1px;white-space:nowrap;color:#6b7079;font-weight:700;-webkit-text-stroke:0;left:1563.7px;transform-origin:0 0;transform:scaleX(0.8381);">ЕИ</div>
<div class="t" style="position:absolute;top:494.31px;font-size:16.1px;line-height:16.1px;white-space:nowrap;color:#6b7079;font-weight:700;-webkit-text-stroke:0;left:1631px;transform-origin:0 0;transform:scaleX(0.9290);">Кол-во на</div>
<div style="position:absolute;left:1612px;top:494px;width:111px;height:29.5px;overflow:hidden"><div style="position:absolute;left:-1612px;top:-494px;width:1890px;height:845px"><div class="t" style="position:absolute;top:512.82px;font-size:16.1px;line-height:16.1px;white-space:nowrap;color:#6b7079;font-weight:700;-webkit-text-stroke:0;left:1667px;transform-origin:50% 0;transform:translateX(-50%) scaleX(0.9181);">складе</div></div></div>
<div style="position:absolute;left:1724px;top:494px;width:53px;height:33px;overflow:hidden"><div style="position:absolute;left:-1724px;top:-494px;width:1890px;height:845px"><div class="t" style="position:absolute;top:503.01px;font-size:16.1px;line-height:16.1px;white-space:nowrap;color:#6b7079;font-weight:700;-webkit-text-stroke:0;left:1749px;transform-origin:0 0;transform:scaleX(0.9342);">Осталось</div></div></div>
<div style="position:absolute;left:1537px;top:462px;width:240px;height:32px;overflow:hidden"><div style="position:absolute;left:-1537px;top:-462px;width:1890px;height:845px"><div class="t" style="position:absolute;top:464.91px;font-size:16.1px;line-height:16.1px;white-space:nowrap;color:#6b7079;font-weight:700;-webkit-text-stroke:0;left:1707.6px;transform-origin:0 0;transform:scaleX(0.9342);">В отгрузочных величинах</div></div></div>
<div style="position:absolute;left:99px;top:528.3px;width:72px;height:32px;box-sizing:border-box;border:1px solid #d7dbe4;border-radius:6px;background:#fff"></div>
<div class="t" style="position:absolute;top:537.10px;font-size:16px;line-height:16px;white-space:nowrap;color:#bdc4d0;font-weight:400;font-style:italic;left:109.3px;transform-origin:0 0;transform:scaleX(0.9486);">Филь...</div>
<div style="position:absolute;left:181px;top:528.3px;width:326px;height:32px;box-sizing:border-box;border:1px solid #d7dbe4;border-radius:6px;background:#fff"></div>
<div class="t" style="position:absolute;top:537.10px;font-size:16px;line-height:16px;white-space:nowrap;color:#bdc4d0;font-weight:400;font-style:italic;left:190.8px;transform-origin:0 0;transform:scaleX(1.0124);">Фильтр по колонке</div>
<div style="position:absolute;left:517px;top:528.3px;width:114px;height:32px;box-sizing:border-box;border:1px solid #d7dbe4;border-radius:6px;background:#fff"></div>
<div class="t" style="position:absolute;top:537.10px;font-size:16px;line-height:16px;white-space:nowrap;color:#bdc4d0;font-weight:400;font-style:italic;left:527.4px;transform-origin:0 0;transform:scaleX(0.9842);">Фильтр п...</div>
<div style="position:absolute;left:642px;top:528.3px;width:176px;height:32px;box-sizing:border-box;border:1px solid #d7dbe4;border-radius:6px;background:#fff"></div>
<div class="t" style="position:absolute;top:537.10px;font-size:16px;line-height:16px;white-space:nowrap;color:#bdc4d0;font-weight:400;font-style:italic;left:651.8px;transform-origin:0 0;transform:scaleX(1.0117);">Фильтр по колонке</div>
<div style="position:absolute;left:829px;top:528.3px;width:53px;height:32px;box-sizing:border-box;border:1px solid #d7dbe4;border-radius:6px;background:#fff"></div>
<div class="t" style="position:absolute;top:537.10px;font-size:16px;line-height:16px;white-space:nowrap;color:#bdc4d0;font-weight:400;font-style:italic;left:839.6px;transform-origin:0 0;transform:scaleX(0.8863);">Ф...</div>
<div style="position:absolute;left:892px;top:528.3px;width:64.5px;height:32px;box-sizing:border-box;border:1px solid #d7dbe4;border-radius:6px;background:#fff"></div>
<div class="t" style="position:absolute;top:537.10px;font-size:16px;line-height:16px;white-space:nowrap;color:#bdc4d0;font-weight:400;font-style:italic;left:902.3px;transform-origin:0 0;transform:scaleX(0.9321);">Фил...</div>
<div style="position:absolute;left:967.4px;top:528.3px;width:101.30000000000007px;height:32px;box-sizing:border-box;border:1px solid #d7dbe4;border-radius:6px;background:#fff"></div>
<div class="t" style="position:absolute;top:537.10px;font-size:16px;line-height:16px;white-space:nowrap;color:#bdc4d0;font-weight:400;font-style:italic;left:977.4px;transform-origin:0 0;transform:scaleX(0.9773);">Фильтр ...</div>
<div style="position:absolute;left:1079.4px;top:528.3px;width:102.0px;height:32px;box-sizing:border-box;border:1px solid #d7dbe4;border-radius:6px;background:#fff"></div>
<div class="t" style="position:absolute;top:537.10px;font-size:16px;line-height:16px;white-space:nowrap;color:#bdc4d0;font-weight:400;font-style:italic;left:1090px;transform-origin:0 0;transform:scaleX(0.9760);">Фильтр ...</div>
<div style="position:absolute;left:1192.6px;top:528.3px;width:101.20000000000005px;height:32px;box-sizing:border-box;border:1px solid #d7dbe4;border-radius:6px;background:#fff"></div>
<div class="t" style="position:absolute;top:537.10px;font-size:16px;line-height:16px;white-space:nowrap;color:#bdc4d0;font-weight:400;font-style:italic;left:1202.5px;transform-origin:0 0;transform:scaleX(0.9697);">Фильтр ...</div>
<div style="position:absolute;left:1304.5px;top:528.3px;width:102.0px;height:32px;box-sizing:border-box;border:1px solid #d7dbe4;border-radius:6px;background:#fff"></div>
<div class="t" style="position:absolute;top:537.10px;font-size:16px;line-height:16px;white-space:nowrap;color:#bdc4d0;font-weight:400;font-style:italic;left:1315.2px;transform-origin:0 0;transform:scaleX(0.9735);">Фильтр ...</div>
<div style="position:absolute;left:1417.3px;top:528.3px;width:114.29999999999995px;height:32px;box-sizing:border-box;border:1px solid #d7dbe4;border-radius:6px;background:#fff"></div>
<div class="t" style="position:absolute;top:537.10px;font-size:16px;line-height:16px;white-space:nowrap;color:#bdc4d0;font-weight:400;font-style:italic;left:1427.2px;transform-origin:0 0;transform:scaleX(0.9830);">Фильтр п...</div>
<div style="position:absolute;left:1542px;top:528.3px;width:64.5px;height:32px;box-sizing:border-box;border:1px solid #d7dbe4;border-radius:6px;background:#fff"></div>
<div class="t" style="position:absolute;top:537.10px;font-size:16px;line-height:16px;white-space:nowrap;color:#bdc4d0;font-weight:400;font-style:italic;left:1552px;transform-origin:0 0;transform:scaleX(0.9321);">Фил...</div>
<div style="position:absolute;left:1617.3px;top:528.3px;width:100.90000000000009px;height:32px;box-sizing:border-box;border:1px solid #d7dbe4;border-radius:6px;background:#fff"></div>
<div class="t" style="position:absolute;top:537.10px;font-size:16px;line-height:16px;white-space:nowrap;color:#bdc4d0;font-weight:400;font-style:italic;left:1627.2px;transform-origin:0 0;transform:scaleX(0.9798);">Фильтр ...</div>
<div style="position:absolute;left:93.5px;top:520px;width:1683.0px;height:50px;overflow:hidden"><div style="position:absolute;left:1635.7px;top:8.3px;width:110.79999999999995px;height:32px;box-sizing:border-box;border:1px solid #d7dbe4;border-radius:6px;background:#fff"></div></div>
<div style="position:absolute;left:93.5px;top:520px;width:1683.0px;height:50px;overflow:hidden"><div style="position:absolute;left:-93.5px;top:-520px;width:1890px;height:845px"><div class="t" style="position:absolute;top:537.10px;font-size:16px;line-height:16px;white-space:nowrap;color:#bdc4d0;font-weight:400;font-style:italic;left:1739.8px;transform-origin:0 0;transform:scaleX(0.9760);">Фильтр ...</div></div></div>
<div style="position:absolute;left:1299px;top:567.5px;width:112px;height:140px;background:#b4fda7"></div>
<div style="position:absolute;left:1299px;top:602px;width:112px;height:1px;background:#d9eed4"></div>
<div style="position:absolute;left:1299px;top:637px;width:112px;height:1px;background:#d9eed4"></div>
<div style="position:absolute;left:1299px;top:672px;width:112px;height:1px;background:#d9eed4"></div>
<div style="position:absolute;left:1289.5px;top:561px;width:126px;height:151px;box-sizing:border-box;border:4.5px solid #e0392f;border-radius:9px"></div>
<div class="t" style="position:absolute;top:575.93px;font-size:16.2px;line-height:16.2px;white-space:nowrap;color:#5f6268;font-weight:400;left:103.5px;transform-origin:0 0;transform:scaleX(1.0085);">65068</div>
<div class="t" style="position:absolute;top:575.93px;font-size:16.2px;line-height:16.2px;white-space:nowrap;color:#5f6268;font-weight:400;left:184.3px;transform-origin:0 0;transform:scaleX(1.0771);">Ацетон технический</div>
<div class="t" style="position:absolute;top:575.93px;font-size:16.2px;line-height:16.2px;white-space:nowrap;color:#5f6268;font-weight:400;left:835.7px;transform-origin:0 0;transform:scaleX(0.9725);">10.01</div>
<div class="t" style="position:absolute;top:575.93px;font-size:16.2px;line-height:16.2px;white-space:nowrap;color:#5f6268;font-weight:400;left:895.7px;transform-origin:0 0;transform:scaleX(1.0085);">кг</div>
<div class="t" style="position:absolute;top:575.93px;font-size:16.2px;line-height:16.2px;white-space:nowrap;color:#5f6268;font-weight:400;right:826.2px;transform-origin:100% 0;transform:scaleX(1.0085);">490.0000</div>
<div class="t" style="position:absolute;top:575.93px;font-size:16.2px;line-height:16.2px;white-space:nowrap;color:#5f6268;font-weight:400;right:714px;transform-origin:100% 0;transform:scaleX(1.0085);">0.0000</div>
<div class="t" style="position:absolute;top:575.93px;font-size:16.2px;line-height:16.2px;white-space:nowrap;color:#5f6268;font-weight:400;right:601.4000000000001px;transform-origin:100% 0;transform:scaleX(1.0085);">400.0000</div>
<div class="t" style="position:absolute;top:575.93px;font-size:16.2px;line-height:16.2px;white-space:nowrap;color:#222;font-weight:400;right:489px;transform-origin:100% 0;transform:scaleX(1.0085);">90.0000</div>
<div class="t" style="position:absolute;top:575.93px;font-size:16.2px;line-height:16.2px;white-space:nowrap;color:#5f6268;font-weight:400;right:364px;transform-origin:100% 0;transform:scaleX(1.0085);">41.67</div>
<div class="t" style="position:absolute;top:575.93px;font-size:16.2px;line-height:16.2px;white-space:nowrap;color:#333;font-weight:400;left:1545.4px;transform-origin:0 0;transform:scaleX(1.0085);">кг</div>
<div class="t" style="position:absolute;top:575.93px;font-size:16.2px;line-height:16.2px;white-space:nowrap;color:#5f6268;font-weight:400;right:176.29999999999995px;transform-origin:100% 0;transform:scaleX(1.0085);">490.0000</div>
<div style="position:absolute;left:1724px;top:567px;width:53px;height:140px;overflow:hidden"><div style="position:absolute;left:-1724px;top:-567px;width:1890px;height:845px"><div class="t" style="position:absolute;top:575.93px;font-size:16.2px;line-height:16.2px;white-space:nowrap;color:#5f6268;font-weight:400;right:64px;transform-origin:100% 0;transform:scaleX(1.0085);">400.0000</div></div></div>
<div class="t" style="position:absolute;top:610.93px;font-size:16.2px;line-height:16.2px;white-space:nowrap;color:#5f6268;font-weight:400;left:103.5px;transform-origin:0 0;transform:scaleX(1.0085);">65102</div>
<div class="t" style="position:absolute;top:610.93px;font-size:16.2px;line-height:16.2px;white-space:nowrap;color:#5f6268;font-weight:400;left:184.3px;transform-origin:0 0;transform:scaleX(1.0134);">Аэросил 175</div>
<div class="t" style="position:absolute;top:610.93px;font-size:16.2px;line-height:16.2px;white-space:nowrap;color:#5f6268;font-weight:400;left:835.7px;transform-origin:0 0;transform:scaleX(0.9725);">10.01</div>
<div class="t" style="position:absolute;top:610.93px;font-size:16.2px;line-height:16.2px;white-space:nowrap;color:#5f6268;font-weight:400;left:895.7px;transform-origin:0 0;transform:scaleX(1.0085);">кг</div>
<div class="t" style="position:absolute;top:610.93px;font-size:16.2px;line-height:16.2px;white-space:nowrap;color:#5f6268;font-weight:400;right:826.2px;transform-origin:100% 0;transform:scaleX(1.0085);">25.0000</div>
<div class="t" style="position:absolute;top:610.93px;font-size:16.2px;line-height:16.2px;white-space:nowrap;color:#5f6268;font-weight:400;right:714px;transform-origin:100% 0;transform:scaleX(1.0085);">0.0000</div>
<div class="t" style="position:absolute;top:610.93px;font-size:16.2px;line-height:16.2px;white-space:nowrap;color:#5f6268;font-weight:400;right:601.4000000000001px;transform-origin:100% 0;transform:scaleX(1.0085);">5.0000</div>
<div class="t" style="position:absolute;top:610.93px;font-size:16.2px;line-height:16.2px;white-space:nowrap;color:#222;font-weight:400;right:489px;transform-origin:100% 0;transform:scaleX(1.0085);">20.0000</div>
<div class="t" style="position:absolute;top:610.93px;font-size:16.2px;line-height:16.2px;white-space:nowrap;color:#5f6268;font-weight:400;right:364px;transform-origin:100% 0;transform:scaleX(1.0085);">83.33</div>
<div class="t" style="position:absolute;top:610.93px;font-size:16.2px;line-height:16.2px;white-space:nowrap;color:#333;font-weight:400;left:1545.4px;transform-origin:0 0;transform:scaleX(1.0085);">кг</div>
<div class="t" style="position:absolute;top:610.93px;font-size:16.2px;line-height:16.2px;white-space:nowrap;color:#5f6268;font-weight:400;right:176.29999999999995px;transform-origin:100% 0;transform:scaleX(1.0085);">25.0000</div>
<div class="t" style="position:absolute;top:645.93px;font-size:16.2px;line-height:16.2px;white-space:nowrap;color:#5f6268;font-weight:400;left:103.5px;transform-origin:0 0;transform:scaleX(1.0085);">64967</div>
<div class="t" style="position:absolute;top:645.93px;font-size:16.2px;line-height:16.2px;white-space:nowrap;color:#5f6268;font-weight:400;left:184.3px;transform-origin:0 0;transform:scaleX(1.0344);">Техуглерод П 514</div>
<div class="t" style="position:absolute;top:645.93px;font-size:16.2px;line-height:16.2px;white-space:nowrap;color:#5f6268;font-weight:400;left:835.7px;transform-origin:0 0;transform:scaleX(0.9725);">10.01</div>
<div class="t" style="position:absolute;top:645.93px;font-size:16.2px;line-height:16.2px;white-space:nowrap;color:#5f6268;font-weight:400;left:895.7px;transform-origin:0 0;transform:scaleX(1.0085);">кг</div>
<div class="t" style="position:absolute;top:645.93px;font-size:16.2px;line-height:16.2px;white-space:nowrap;color:#5f6268;font-weight:400;right:826.2px;transform-origin:100% 0;transform:scaleX(1.0085);">5 000.0000</div>
<div class="t" style="position:absolute;top:645.93px;font-size:16.2px;line-height:16.2px;white-space:nowrap;color:#5f6268;font-weight:400;right:714px;transform-origin:100% 0;transform:scaleX(1.0085);">0.0000</div>
<div class="t" style="position:absolute;top:645.93px;font-size:16.2px;line-height:16.2px;white-space:nowrap;color:#5f6268;font-weight:400;right:601.4000000000001px;transform-origin:100% 0;transform:scaleX(1.0085);">5 000.0000</div>
<div class="t" style="position:absolute;top:645.93px;font-size:16.2px;line-height:16.2px;white-space:nowrap;color:#5f6268;font-weight:400;right:364px;transform-origin:100% 0;transform:scaleX(1.0085);">67.50</div>
<div class="t" style="position:absolute;top:645.93px;font-size:16.2px;line-height:16.2px;white-space:nowrap;color:#333;font-weight:400;left:1545.4px;transform-origin:0 0;transform:scaleX(1.0085);">кг</div>
<div class="t" style="position:absolute;top:645.93px;font-size:16.2px;line-height:16.2px;white-space:nowrap;color:#5f6268;font-weight:400;right:176.29999999999995px;transform-origin:100% 0;transform:scaleX(1.0085);">5 000.0000</div>
<div style="position:absolute;left:1724px;top:567px;width:53px;height:140px;overflow:hidden"><div style="position:absolute;left:-1724px;top:-567px;width:1890px;height:845px"><div class="t" style="position:absolute;top:645.93px;font-size:16.2px;line-height:16.2px;white-space:nowrap;color:#5f6268;font-weight:400;right:64px;transform-origin:100% 0;transform:scaleX(1.0085);">5 000.0000</div></div></div>
<div class="t" style="position:absolute;top:680.93px;font-size:16.2px;line-height:16.2px;white-space:nowrap;color:#5f6268;font-weight:400;left:103.5px;transform-origin:0 0;transform:scaleX(1.0085);">64967</div>
<div class="t" style="position:absolute;top:680.93px;font-size:16.2px;line-height:16.2px;white-space:nowrap;color:#5f6268;font-weight:400;left:184.3px;transform-origin:0 0;transform:scaleX(1.0344);">Техуглерод П 514</div>
<div class="t" style="position:absolute;top:680.93px;font-size:16.2px;line-height:16.2px;white-space:nowrap;color:#5f6268;font-weight:400;left:835.7px;transform-origin:0 0;transform:scaleX(0.9725);">10.01</div>
<div class="t" style="position:absolute;top:680.93px;font-size:16.2px;line-height:16.2px;white-space:nowrap;color:#5f6268;font-weight:400;left:895.7px;transform-origin:0 0;transform:scaleX(1.0085);">кг</div>
<div class="t" style="position:absolute;top:680.93px;font-size:16.2px;line-height:16.2px;white-space:nowrap;color:#5f6268;font-weight:400;right:826.2px;transform-origin:100% 0;transform:scaleX(1.0085);">10 000.0000</div>
<div class="t" style="position:absolute;top:680.93px;font-size:16.2px;line-height:16.2px;white-space:nowrap;color:#5f6268;font-weight:400;right:714px;transform-origin:100% 0;transform:scaleX(1.0085);">0.0000</div>
<div class="t" style="position:absolute;top:680.93px;font-size:16.2px;line-height:16.2px;white-space:nowrap;color:#5f6268;font-weight:400;right:601.4000000000001px;transform-origin:100% 0;transform:scaleX(1.0085);">10 000.0000</div>
<div class="t" style="position:absolute;top:680.93px;font-size:16.2px;line-height:16.2px;white-space:nowrap;color:#5f6268;font-weight:400;right:364px;transform-origin:100% 0;transform:scaleX(1.0085);">72.50</div>
<div class="t" style="position:absolute;top:680.93px;font-size:16.2px;line-height:16.2px;white-space:nowrap;color:#333;font-weight:400;left:1545.4px;transform-origin:0 0;transform:scaleX(1.0085);">кг</div>
<div class="t" style="position:absolute;top:680.93px;font-size:16.2px;line-height:16.2px;white-space:nowrap;color:#5f6268;font-weight:400;right:176.29999999999995px;transform-origin:100% 0;transform:scaleX(1.0085);">10 000.0000</div>
<div style="position:absolute;left:1724px;top:567px;width:53px;height:140px;overflow:hidden"><div style="position:absolute;left:-1724px;top:-567px;width:1890px;height:845px"><div class="t" style="position:absolute;top:680.93px;font-size:16.2px;line-height:16.2px;white-space:nowrap;color:#5f6268;font-weight:400;right:64px;transform-origin:100% 0;transform:scaleX(1.0085);">10 000.0000</div></div></div>
<div style="position:absolute;left:98.5px;top:754px;width:854px;height:10px;background:#9ea2aa;border-radius:5px"></div>
<div style="position:absolute;left:93.3px;top:776.2px;width:412.0px;height:34.5px;box-sizing:border-box;border:1px solid #d9dce2;border-radius:5px;background:linear-gradient(#f7f7f8,#f0f0f1)"></div>
<div style="position:absolute;left:234px;top:783px;width:20px;height:20px;background:#13977b;border-radius:2px"></div>
<svg style="position:absolute;left:234px;top:783px;" width="20" height="20" viewBox="0 0 20 20"><path d="M10 4.5 V15.5 M4.5 10 H15.5" stroke="#fff" stroke-width="2.8"/></svg>
<div class="t" style="position:absolute;top:787.28px;font-size:15.2px;line-height:15.2px;white-space:nowrap;color:#444a54;font-weight:400;left:266px;transform-origin:0 0;transform:scaleX(1.0481);">Вставить всё</div>
<div style="position:absolute;left:1362px;top:776.3px;width:413px;height:34.30000000000007px;box-sizing:border-box;border:1px solid #d9dce2;border-radius:5px;background:linear-gradient(#f7f7f8,#f0f0f1)"></div>
<div style="position:absolute;left:1473px;top:783px;width:20px;height:20px;background:#13977b;border-radius:2px"></div>
<svg style="position:absolute;left:1473px;top:783px;" width="20" height="20" viewBox="0 0 20 20"><path d="M10 4.5 V15.5 M4.5 10 H15.5" stroke="#fff" stroke-width="2.8"/></svg>
<div class="t" style="position:absolute;top:787.28px;font-size:15.2px;line-height:15.2px;white-space:nowrap;color:#444a54;font-weight:400;left:1504.3px;transform-origin:0 0;transform:scaleX(1.0739);">Вставить выбранное</div>
<div style="position:absolute;left:1365px;top:773px;width:404px;height:46px;box-sizing:border-box;border:4.5px solid #e0392f;border-radius:9px"></div>
<div class="t" style="position:absolute;top:785.33px;font-size:14.2px;line-height:14.2px;white-space:nowrap;color:#474c56;font-weight:400;left:618.8px;transform-origin:0 0;transform:scaleX(1.0658);">Развернуть по партиям:</div>
<div style="position:absolute;left:798.7px;top:786px;width:15px;height:15px;background:#1a73e8;border-radius:3px"></div>
<svg style="position:absolute;left:798.7px;top:786px;" width="15" height="15" viewBox="0 0 15 15"><path d="M3.2 7.8 L6.2 10.8 L11.8 4.2" stroke="#fff" stroke-width="2" fill="none"/></svg>
<div class="t" style="position:absolute;top:785.33px;font-size:14.2px;line-height:14.2px;white-space:nowrap;color:#474c56;font-weight:400;left:1041.5px;transform-origin:0 0;transform:scaleX(1.0656);">Развернуть по ячейкам:</div>
<div style="position:absolute;left:1222px;top:786px;width:14.5px;height:14.5px;box-sizing:border-box;border:1.4px solid #6f6f6f;border-radius:3px;background:#fff"></div>
</body></html>
